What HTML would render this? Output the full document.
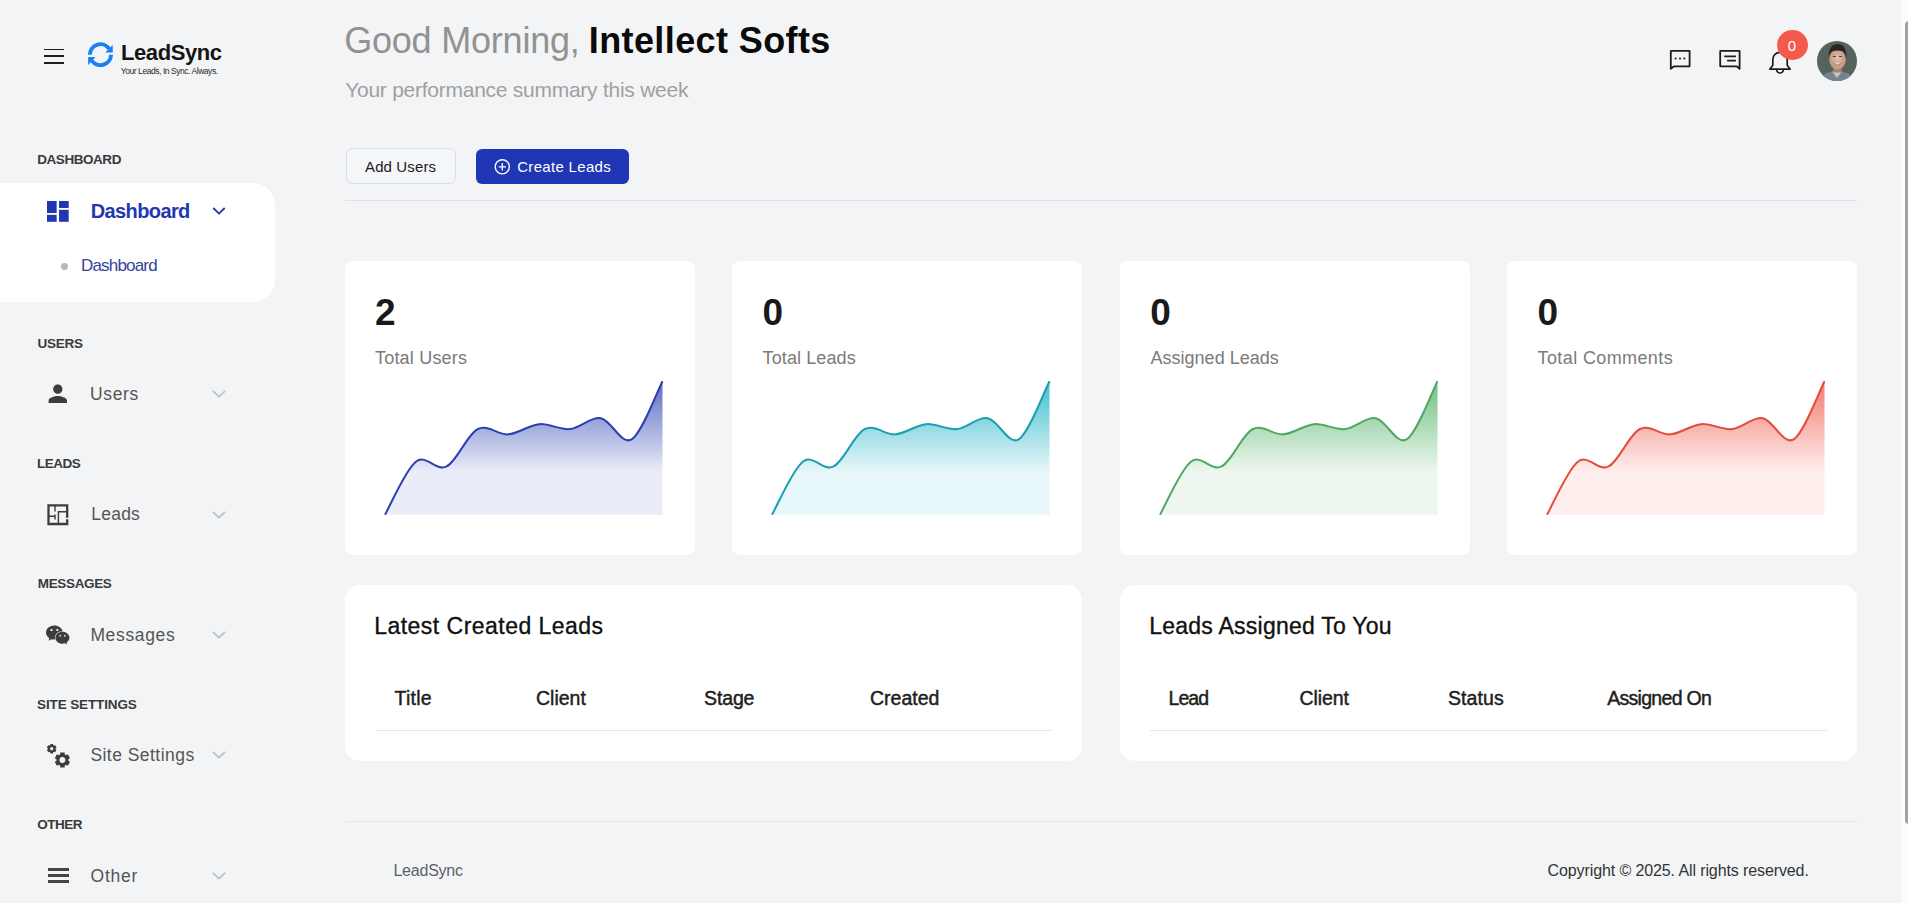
<!DOCTYPE html>
<html><head><meta charset="utf-8"><style>
*{box-sizing:border-box;margin:0;padding:0}
html,body{width:1908px;height:903px;overflow:hidden;background:#f3f4f6;font-family:"Liberation Sans",sans-serif}
.a{position:absolute}
.t{position:absolute;white-space:nowrap;line-height:1}
.card{position:absolute;background:#fff;border-radius:12px}
</style></head><body>
<!-- hamburger -->
<div class="a" style="left:44px;top:48.5px;width:20px;height:1.8px;background:#1e1e1e"></div>
<div class="a" style="left:44px;top:55.2px;width:20px;height:1.8px;background:#1e1e1e"></div>
<div class="a" style="left:44px;top:62px;width:20px;height:1.8px;background:#1e1e1e"></div>
<!-- logo icon -->
<svg class="a" style="left:84px;top:38px" width="34" height="34" viewBox="0 0 34 34">
<path d="M6 16.7 A10.5 10.5 0 0 1 25.2 10.8" fill="none" stroke="#1a7ff0" stroke-width="4"/>
<polygon points="28.7,7.0 28.8,14.6 21.3,14.6" fill="#1a7ff0"/>
<path d="M27 16.7 A10.5 10.5 0 0 1 7.9 22.6" fill="none" stroke="#1a7ff0" stroke-width="4"/>
<polygon points="4.2,19.1 4.2,26.9 11.5,19.1" fill="#1a7ff0"/>
</svg>
<!-- sidebar active panel -->
<div class="a" style="left:0;top:182.5px;width:275px;height:119.5px;background:#fff;border-radius:0 22px 22px 0"></div>
<svg class="a" style="left:47px;top:201.2px" width="21.7" height="20.8" viewBox="0 0 18 17.3" preserveAspectRatio="none">
<rect x="0" y="0" width="8" height="10" fill="#1f38b0"/><rect x="0" y="11.5" width="8" height="5.8" fill="#1f38b0"/>
<rect x="10" y="0" width="8" height="5.8" fill="#1f38b0"/><rect x="10" y="7.3" width="8" height="10" fill="#1f38b0"/>
</svg>
<svg class="a" style="left:210px;top:203px" width="18" height="16" viewBox="0 0 18 16"><path d="M3.3 5 L9 10.6 L14.7 5" fill="none" stroke="#2532a6" stroke-width="1.8"/></svg>
<div class="a" style="left:61px;top:263.3px;width:6.8px;height:6.8px;border-radius:50%;background:#b9b9b9"></div>
<!-- users icon -->
<svg class="a" style="left:44.1px;top:380.4px" width="27.6" height="27.6" viewBox="0 0 24 24"><path fill="#3d3d3d" d="M12 12c2.21 0 4-1.79 4-4s-1.79-4-4-4-4 1.79-4 4 1.79 4 4 4zm0 2c-2.67 0-8 1.34-8 4v2h16v-2c0-2.66-5.33-4-8-4z"/></svg>
<!-- leads icon -->
<svg class="a" style="left:46px;top:503px" width="24" height="24" viewBox="0 0 24 24">
<path d="M21.2 13.5 V2.3 H2.5 V21 H21.2 V17.5" fill="none" stroke="#3d3d3d" stroke-width="2.3" stroke-linejoin="miter" stroke-linecap="square"/>
<path d="M9 3 V8.5 M9 11.5 V16.5 M2.5 13.3 H9 M12.4 21 V8.8 H21.2" fill="none" stroke="#3d3d3d" stroke-width="1.4"/>
</svg>
<!-- messages icon (weixin) -->
<svg class="a" style="left:46px;top:624.5px" width="23.5" height="21" viewBox="13 22 550 490"><path fill="#3d3d3d" d="M385.2 167.6c6.4 0 12.6.3 18.8 1.1C387.4 90.3 303.3 32 207.7 32 100.5 32 13 104.8 13 197.4c0 53.4 29.3 97.5 77.9 131.6l-19.3 58.6 68-34.1c24.4 4.8 43.8 9.7 68.2 9.7 6.2 0 12.1-.3 18.3-.8-4-12.9-6.2-26.6-6.2-40.8-.1-84.9 72.9-154 165.3-154zm-104.5-52.9c14.5 0 24.2 9.7 24.2 24.4 0 14.5-9.7 24.2-24.2 24.2-14.8 0-29.3-9.7-29.3-24.2.1-14.7 14.6-24.4 29.3-24.4zm-136.4 48.6c-14.5 0-29.3-9.7-29.3-24.2 0-14.8 14.8-24.4 29.3-24.4 14.8 0 24.4 9.7 24.4 24.4 0 14.6-9.6 24.2-24.4 24.2zM563 319.4c0-77.9-77.9-141.3-165.4-141.3-92.7 0-165.4 63.4-165.4 141.3S305 460.7 397.6 460.7c19.3 0 38.9-5.1 58.6-9.9l53.4 29.3-14.8-48.6C534 402.1 563 363.2 563 319.4zm-219.1-24.5c-9.7 0-19.3-9.7-19.3-19.6 0-9.7 9.7-19.3 19.3-19.3 14.8 0 24.4 9.7 24.4 19.3 0 10-9.7 19.6-24.4 19.6zm107.1 0c-9.7 0-19.3-9.7-19.3-19.6 0-9.7 9.7-19.3 19.3-19.3 14.5 0 24.4 9.7 24.4 19.3.1 10-9.9 19.6-24.4 19.6z"/></svg>
<!-- settings icon -->
<svg class="a" style="left:0;top:0" width="100" height="800" viewBox="0 0 100 800"><path fill="#3d3d3d" fill-rule="evenodd" d="M50.26 745.07 L50.28 743.91 L53.12 743.91 L53.14 745.07 L54.12 745.64 L55.14 745.07 L56.56 747.53 L55.56 748.13 L55.56 749.27 L56.56 749.87 L55.14 752.33 L54.12 751.76 L53.14 752.33 L53.12 753.49 L50.28 753.49 L50.26 752.33 L49.28 751.76 L48.26 752.33 L46.84 749.87 L47.84 749.27 L47.84 748.13 L46.84 747.53 L48.26 745.07 L49.28 745.64 Z M50.10 748.70 a1.60 1.60 0 1 0 3.20 0 a1.60 1.60 0 1 0 -3.20 0 Z M60.15 754.33 L60.16 752.43 L64.64 752.43 L64.65 754.33 L66.19 755.22 L67.84 754.27 L70.08 758.16 L68.43 759.11 L68.43 760.89 L70.08 761.84 L67.84 765.73 L66.19 764.78 L64.65 765.67 L64.64 767.57 L60.16 767.57 L60.15 765.67 L58.61 764.78 L56.96 765.73 L54.72 761.84 L56.37 760.89 L56.37 759.11 L54.72 758.16 L56.96 754.27 L58.61 755.22 Z M59.50 760.00 a2.90 2.90 0 1 0 5.80 0 a2.90 2.90 0 1 0 -5.80 0 Z"/></svg>
<!-- other icon -->
<div class="a" style="left:47.5px;top:868.2px;width:21px;height:2.5px;background:#444"></div>
<div class="a" style="left:47.5px;top:874.2px;width:21px;height:2.5px;background:#444"></div>
<div class="a" style="left:47.5px;top:880.2px;width:21px;height:2.5px;background:#444"></div>
<!-- gray chevrons -->
<svg class="a" style="left:211px;top:386px" width="16" height="16" viewBox="0 0 16 16"><path d="M1.8 4.8 L8 10.6 L14.2 4.8" fill="none" stroke="#bcc0c9" stroke-width="1.8"/></svg>
<svg class="a" style="left:211px;top:506.5px" width="16" height="16" viewBox="0 0 16 16"><path d="M1.8 4.8 L8 10.6 L14.2 4.8" fill="none" stroke="#bcc0c9" stroke-width="1.8"/></svg>
<svg class="a" style="left:211px;top:627px" width="16" height="16" viewBox="0 0 16 16"><path d="M1.8 4.8 L8 10.6 L14.2 4.8" fill="none" stroke="#bcc0c9" stroke-width="1.8"/></svg>
<svg class="a" style="left:211px;top:747px" width="16" height="16" viewBox="0 0 16 16"><path d="M1.8 4.8 L8 10.6 L14.2 4.8" fill="none" stroke="#bcc0c9" stroke-width="1.8"/></svg>
<svg class="a" style="left:211px;top:867.5px" width="16" height="16" viewBox="0 0 16 16"><path d="M1.8 4.8 L8 10.6 L14.2 4.8" fill="none" stroke="#bcc0c9" stroke-width="1.8"/></svg>

<!-- buttons -->
<div class="a" style="left:345.5px;top:148.2px;width:110px;height:36.3px;border:1px solid #d8dce6;border-radius:7px;background:#f5f6f9"></div>
<div class="a" style="left:476px;top:149px;width:153px;height:34.8px;border-radius:6px;background:#1f37b5"></div>
<svg class="a" style="left:493px;top:157.5px" width="18" height="18" viewBox="0 0 18 18"><circle cx="9.3" cy="8.8" r="7.1" fill="none" stroke="#fff" stroke-width="1.35"/><path d="M9.3 5.1V12.5M5.6 8.8H13" stroke="#fff" stroke-width="1.35"/></svg>
<div class="a" style="left:345px;top:200px;width:1512px;height:1px;background:#dfe1e6"></div>
<!-- top right icons -->
<svg class="a" style="left:1665px;top:45px" width="30" height="30" viewBox="0 0 30 30">
<path d="M5.8 23.8 V6.2 Q5.8 5.8 6.2 5.8 H24.2 Q24.6 5.8 24.6 6.2 V20.9 Q24.6 21.3 24.2 21.3 H9.2 Z" fill="none" stroke="#1c1c1c" stroke-width="1.8" stroke-linejoin="round"/>
<circle cx="10.6" cy="13.5" r="1.05" fill="#1c1c1c"/><circle cx="15" cy="13.5" r="1.05" fill="#1c1c1c"/><circle cx="19.3" cy="13.5" r="1.05" fill="#1c1c1c"/>
</svg>
<svg class="a" style="left:1715px;top:45px" width="30" height="30" viewBox="0 0 30 30">
<path d="M24.6 23.8 V6.2 Q24.6 5.8 24.2 5.8 H5.6 Q5.2 5.8 5.2 6.2 V20.9 Q5.2 21.3 5.6 21.3 H21.6 Z" fill="none" stroke="#1c1c1c" stroke-width="1.8" stroke-linejoin="round"/>
<path d="M9.2 11.4 H20.9 M12.1 15.6 H20.9" stroke="#1c1c1c" stroke-width="1.8"/>
</svg>
<svg class="a" style="left:1765px;top:45px" width="30" height="32" viewBox="0 0 30 32">
<path d="M4.8 24.2 L7.8 20.3 V14.5 A7.2 7.2 0 0 1 22.2 14.5 V20.3 L25.2 24.2 Z" fill="none" stroke="#1c1c1c" stroke-width="1.7" stroke-linejoin="round"/>
<path d="M11.6 24.6 A3.4 3.4 0 0 0 18.4 24.6" fill="none" stroke="#1c1c1c" stroke-width="1.7"/>
</svg>
<div class="a" style="left:1776.5px;top:30px;width:31px;height:30px;border-radius:50%;background:#f5594b"></div>
<!-- avatar -->
<svg class="a" style="left:1817px;top:41px" width="40" height="40" viewBox="0 0 40 40">
<defs><clipPath id="av"><circle cx="20" cy="20" r="20"/></clipPath>
<radialGradient id="fg" cx="0.5" cy="0.45" r="0.6"><stop offset="0" stop-color="#e2c2ab"/><stop offset="1" stop-color="#b89077"/></radialGradient></defs>
<g clip-path="url(#av)">
<rect width="40" height="40" fill="#56625c"/>
<path d="M2 40 C4 33.5 11 30.5 20 30.5 C29 30.5 36 33.5 38 40 Z" fill="#76848f"/>
<path d="M15 30.5 L20 37 L25 30.5 Z" fill="#c9c3bd"/>
<rect x="16.5" y="25" width="8" height="6.5" fill="#a98470"/>
<ellipse cx="20.5" cy="18.5" rx="8.3" ry="10.2" fill="url(#fg)"/>
<path d="M11.8 18 C10.8 7 15.5 3 20.5 3 C26 3 30.2 7 29.2 18 C28.6 12.5 27 9.5 20.5 9.5 C14 9.5 12.4 12.5 11.8 18 Z" fill="#2c2520"/>
<path d="M15.8 15.5 h3 M22 15.5 h3" stroke="#5a3d30" stroke-width="1.1"/>
<path d="M16.5 22.5 Q20.5 25.5 24.5 22.5" fill="#fff" stroke="#8c5e4a" stroke-width="0.8"/>
</g></svg>
<!-- stat cards -->
<div class="card" style="left:345px;top:261px;width:350px;height:294px;border-radius:8px"></div>
<div class="card" style="left:732px;top:261px;width:350px;height:294px;border-radius:8px"></div>
<div class="card" style="left:1120px;top:261px;width:350px;height:294px;border-radius:8px"></div>
<div class="card" style="left:1507px;top:261px;width:350px;height:294px;border-radius:8px"></div>
<!-- table cards -->
<div class="card" style="left:345px;top:585px;width:737px;height:175.5px;border-radius:15px"></div>
<div class="card" style="left:1120px;top:585px;width:737px;height:175.5px;border-radius:15px"></div>
<div class="a" style="left:375px;top:729.5px;width:677px;height:1px;background:#e6e6e6"></div>
<div class="a" style="left:1150px;top:729.5px;width:677px;height:1px;background:#e6e6e6"></div>
<!-- footer -->
<div class="a" style="left:345px;top:821px;width:1512px;height:1px;background:#e3e5e9"></div>
<!-- scrollbar -->
<div class="a" style="left:1900.5px;top:0;width:8px;height:903px;background:#fcfcfc"></div>
<div class="a" style="left:1905px;top:20.5px;width:8px;height:803px;background:#a2a2a2;border-radius:4px"></div>

<svg class="a" style="left:345px;top:261px" width="350" height="294" viewBox="0 0 350 294">
<defs><linearGradient id="gr1" x1="0" y1="120" x2="0" y2="254" gradientUnits="userSpaceOnUse">
<stop offset="0" stop-color="#3049b5" stop-opacity="0.8"/><stop offset="0.68" stop-color="#3049b5" stop-opacity="0.1"/><stop offset="1" stop-color="#3049b5" stop-opacity="0.1"/></linearGradient></defs>
<path d="M40.00 253.70 C45.14 244.86 60.56 208.72 70.83 200.68 C81.11 192.64 91.39 210.89 101.67 205.48 C111.94 200.08 122.22 173.60 132.50 168.25 C142.78 162.90 153.06 174.20 163.33 173.35 C173.61 172.51 183.89 164.06 194.17 163.18 C204.44 162.31 214.72 169.10 225.00 168.10 C235.28 167.10 245.56 155.45 255.83 157.17 C266.11 158.90 276.39 184.61 286.67 178.45 C296.94 172.29 312.36 129.91 317.50 120.20 L317.50 253.70 L40.00 253.70 Z" fill="url(#gr1)"/>
<path d="M40.00 253.70 C45.14 244.86 60.56 208.72 70.83 200.68 C81.11 192.64 91.39 210.89 101.67 205.48 C111.94 200.08 122.22 173.60 132.50 168.25 C142.78 162.90 153.06 174.20 163.33 173.35 C173.61 172.51 183.89 164.06 194.17 163.18 C204.44 162.31 214.72 169.10 225.00 168.10 C235.28 167.10 245.56 155.45 255.83 157.17 C266.11 158.90 276.39 184.61 286.67 178.45 C296.94 172.29 312.36 129.91 317.50 120.20" fill="none" stroke="#2b3fae" stroke-width="2" stroke-linejoin="round"/>
</svg>
<svg class="a" style="left:732px;top:261px" width="350" height="294" viewBox="0 0 350 294">
<defs><linearGradient id="gr2" x1="0" y1="120" x2="0" y2="254" gradientUnits="userSpaceOnUse">
<stop offset="0" stop-color="#13aec2" stop-opacity="0.8"/><stop offset="0.68" stop-color="#13aec2" stop-opacity="0.1"/><stop offset="1" stop-color="#13aec2" stop-opacity="0.1"/></linearGradient></defs>
<path d="M40.00 253.70 C45.14 244.86 60.56 208.72 70.83 200.68 C81.11 192.64 91.39 210.89 101.67 205.48 C111.94 200.08 122.22 173.60 132.50 168.25 C142.78 162.90 153.06 174.20 163.33 173.35 C173.61 172.51 183.89 164.06 194.17 163.18 C204.44 162.31 214.72 169.10 225.00 168.10 C235.28 167.10 245.56 155.45 255.83 157.17 C266.11 158.90 276.39 184.61 286.67 178.45 C296.94 172.29 312.36 129.91 317.50 120.20 L317.50 253.70 L40.00 253.70 Z" fill="url(#gr2)"/>
<path d="M40.00 253.70 C45.14 244.86 60.56 208.72 70.83 200.68 C81.11 192.64 91.39 210.89 101.67 205.48 C111.94 200.08 122.22 173.60 132.50 168.25 C142.78 162.90 153.06 174.20 163.33 173.35 C173.61 172.51 183.89 164.06 194.17 163.18 C204.44 162.31 214.72 169.10 225.00 168.10 C235.28 167.10 245.56 155.45 255.83 157.17 C266.11 158.90 276.39 184.61 286.67 178.45 C296.94 172.29 312.36 129.91 317.50 120.20" fill="none" stroke="#1a9fb1" stroke-width="2" stroke-linejoin="round"/>
</svg>
<svg class="a" style="left:1120px;top:261px" width="350" height="294" viewBox="0 0 350 294">
<defs><linearGradient id="gr3" x1="0" y1="120" x2="0" y2="254" gradientUnits="userSpaceOnUse">
<stop offset="0" stop-color="#4caf62" stop-opacity="0.8"/><stop offset="0.68" stop-color="#4caf62" stop-opacity="0.1"/><stop offset="1" stop-color="#4caf62" stop-opacity="0.1"/></linearGradient></defs>
<path d="M40.00 253.70 C45.14 244.86 60.56 208.72 70.83 200.68 C81.11 192.64 91.39 210.89 101.67 205.48 C111.94 200.08 122.22 173.60 132.50 168.25 C142.78 162.90 153.06 174.20 163.33 173.35 C173.61 172.51 183.89 164.06 194.17 163.18 C204.44 162.31 214.72 169.10 225.00 168.10 C235.28 167.10 245.56 155.45 255.83 157.17 C266.11 158.90 276.39 184.61 286.67 178.45 C296.94 172.29 312.36 129.91 317.50 120.20 L317.50 253.70 L40.00 253.70 Z" fill="url(#gr3)"/>
<path d="M40.00 253.70 C45.14 244.86 60.56 208.72 70.83 200.68 C81.11 192.64 91.39 210.89 101.67 205.48 C111.94 200.08 122.22 173.60 132.50 168.25 C142.78 162.90 153.06 174.20 163.33 173.35 C173.61 172.51 183.89 164.06 194.17 163.18 C204.44 162.31 214.72 169.10 225.00 168.10 C235.28 167.10 245.56 155.45 255.83 157.17 C266.11 158.90 276.39 184.61 286.67 178.45 C296.94 172.29 312.36 129.91 317.50 120.20" fill="none" stroke="#4ea864" stroke-width="2" stroke-linejoin="round"/>
</svg>
<svg class="a" style="left:1507px;top:261px" width="350" height="294" viewBox="0 0 350 294">
<defs><linearGradient id="gr4" x1="0" y1="120" x2="0" y2="254" gradientUnits="userSpaceOnUse">
<stop offset="0" stop-color="#ef5a4a" stop-opacity="0.8"/><stop offset="0.68" stop-color="#ef5a4a" stop-opacity="0.1"/><stop offset="1" stop-color="#ef5a4a" stop-opacity="0.1"/></linearGradient></defs>
<path d="M40.00 253.70 C45.14 244.86 60.56 208.72 70.83 200.68 C81.11 192.64 91.39 210.89 101.67 205.48 C111.94 200.08 122.22 173.60 132.50 168.25 C142.78 162.90 153.06 174.20 163.33 173.35 C173.61 172.51 183.89 164.06 194.17 163.18 C204.44 162.31 214.72 169.10 225.00 168.10 C235.28 167.10 245.56 155.45 255.83 157.17 C266.11 158.90 276.39 184.61 286.67 178.45 C296.94 172.29 312.36 129.91 317.50 120.20 L317.50 253.70 L40.00 253.70 Z" fill="url(#gr4)"/>
<path d="M40.00 253.70 C45.14 244.86 60.56 208.72 70.83 200.68 C81.11 192.64 91.39 210.89 101.67 205.48 C111.94 200.08 122.22 173.60 132.50 168.25 C142.78 162.90 153.06 174.20 163.33 173.35 C173.61 172.51 183.89 164.06 194.17 163.18 C204.44 162.31 214.72 169.10 225.00 168.10 C235.28 167.10 245.56 155.45 255.83 157.17 C266.11 158.90 276.39 184.61 286.67 178.45 C296.94 172.29 312.36 129.91 317.50 120.20" fill="none" stroke="#e34b3c" stroke-width="2" stroke-linejoin="round"/>
</svg>
<div class="t" id="logo" style="left:121.00px;top:41.94px;font-size:22px;font-weight:bold;color:#151515;letter-spacing:-0.428px;">LeadSync</div>
<div class="t" id="tag" style="left:120.80px;top:67.39px;font-size:8.5px;font-weight:normal;color:#2a2a2a;letter-spacing:-0.445px;">Your Leads, In Sync. Always.</div>
<div class="t" id="s1" style="left:37.20px;top:153.47px;font-size:13.5px;font-weight:bold;color:#3a3a3a;letter-spacing:-0.438px;">DASHBOARD</div>
<div class="t" id="dash" style="left:90.80px;top:200.52px;font-size:20px;font-weight:bold;color:#1f38b0;letter-spacing:-0.625px;">Dashboard</div>
<div class="t" id="subdash" style="left:81.00px;top:257.27px;font-size:17px;font-weight:normal;color:#34449c;letter-spacing:-0.812px;">Dashboard</div>
<div class="t" id="s2" style="left:37.40px;top:336.98px;font-size:13.5px;font-weight:bold;color:#3a3a3a;letter-spacing:-0.250px;">USERS</div>
<div class="t" id="i2" style="left:90.00px;top:386.05px;font-size:17.5px;font-weight:normal;color:#555555;letter-spacing:0.625px;">Users</div>
<div class="t" id="s3" style="left:37.00px;top:456.75px;font-size:13.5px;font-weight:bold;color:#3a3a3a;letter-spacing:-0.500px;">LEADS</div>
<div class="t" id="i3" style="left:91.20px;top:506.08px;font-size:17.5px;font-weight:normal;color:#555555;letter-spacing:0.250px;">Leads</div>
<div class="t" id="s4" style="left:37.80px;top:576.74px;font-size:13.5px;font-weight:bold;color:#3a3a3a;letter-spacing:-0.357px;">MESSAGES</div>
<div class="t" id="i4" style="left:90.40px;top:626.64px;font-size:17.5px;font-weight:normal;color:#555555;letter-spacing:0.642px;">Messages</div>
<div class="t" id="s5" style="left:37.00px;top:697.50px;font-size:13.5px;font-weight:bold;color:#3a3a3a;letter-spacing:-0.125px;">SITE SETTINGS</div>
<div class="t" id="i5" style="left:90.40px;top:746.64px;font-size:17.5px;font-weight:normal;color:#555555;letter-spacing:0.458px;">Site Settings</div>
<div class="t" id="s6" style="left:37.20px;top:817.50px;font-size:13.5px;font-weight:bold;color:#3a3a3a;letter-spacing:-0.500px;">OTHER</div>
<div class="t" id="i6" style="left:90.60px;top:868.04px;font-size:17.5px;font-weight:normal;color:#555555;letter-spacing:0.750px;">Other</div>
<div class="t" id="g1" style="left:344.20px;top:23.16px;font-size:36px;font-weight:normal;color:#929292;letter-spacing:-0.208px;">Good Morning,</div>
<div class="t" id="g2" style="left:588.80px;top:23.10px;font-size:36px;font-weight:bold;color:#0a0a0a;letter-spacing:0.393px;">Intellect Softs</div>
<div class="t" id="sub" style="left:345.20px;top:79.33px;font-size:21px;font-weight:normal;color:#a0a0a0;letter-spacing:-0.257px;">Your performance summary this week</div>
<div class="t" id="addu" style="left:365.00px;top:159.39px;font-size:15px;font-weight:normal;color:#1a1a1a;letter-spacing:0.125px;">Add Users</div>
<div class="t" id="crl" style="left:517.20px;top:159.39px;font-size:15px;font-weight:normal;color:#ffffff;letter-spacing:0.318px;">Create Leads</div>
<div class="t" id="badge" style="left:1787.80px;top:37.80px;font-size:15px;font-weight:normal;color:#ffffff;letter-spacing:0.000px;">0</div>
<div class="t" id="n1" style="left:375.00px;top:293.53px;font-size:37px;font-weight:bold;color:#1a1a1a;letter-spacing:0.000px;">2</div>
<div class="t" id="n2" style="left:762.60px;top:293.53px;font-size:37px;font-weight:bold;color:#1a1a1a;letter-spacing:0.000px;">0</div>
<div class="t" id="n3" style="left:1150.20px;top:293.53px;font-size:37px;font-weight:bold;color:#1a1a1a;letter-spacing:0.000px;">0</div>
<div class="t" id="n4" style="left:1537.60px;top:293.53px;font-size:37px;font-weight:bold;color:#1a1a1a;letter-spacing:0.000px;">0</div>
<div class="t" id="l1" style="left:375.00px;top:348.92px;font-size:18px;font-weight:normal;color:#7a7a7a;letter-spacing:0.200px;">Total Users</div>
<div class="t" id="l2" style="left:762.60px;top:348.92px;font-size:18px;font-weight:normal;color:#7a7a7a;letter-spacing:0.100px;">Total Leads</div>
<div class="t" id="l3" style="left:1150.60px;top:348.92px;font-size:18px;font-weight:normal;color:#7a7a7a;letter-spacing:0.000px;">Assigned Leads</div>
<div class="t" id="l4" style="left:1537.60px;top:348.92px;font-size:18px;font-weight:normal;color:#7a7a7a;letter-spacing:0.384px;">Total Comments</div>
<div class="t" id="t1" style="left:374.20px;top:614.89px;font-size:23px;font-weight:normal;color:#111111;letter-spacing:0.474px;-webkit-text-stroke:0.35px #111;">Latest Created Leads</div>
<div class="t" id="t2" style="left:1149.20px;top:614.89px;font-size:23px;font-weight:normal;color:#111111;letter-spacing:0.250px;-webkit-text-stroke:0.35px #111;">Leads Assigned To You</div>
<div class="t" id="h1" style="left:394.60px;top:689.14px;font-size:19.5px;font-weight:normal;color:#1e1e1e;letter-spacing:0.250px;-webkit-text-stroke:0.45px #1e1e1e;">Title</div>
<div class="t" id="h2" style="left:536.00px;top:689.14px;font-size:19.5px;font-weight:normal;color:#1e1e1e;letter-spacing:-0.000px;-webkit-text-stroke:0.45px #1e1e1e;">Client</div>
<div class="t" id="h3" style="left:704.00px;top:689.14px;font-size:19.5px;font-weight:normal;color:#1e1e1e;letter-spacing:-0.125px;-webkit-text-stroke:0.45px #1e1e1e;">Stage</div>
<div class="t" id="h4" style="left:870.00px;top:689.14px;font-size:19.5px;font-weight:normal;color:#1e1e1e;letter-spacing:0.000px;-webkit-text-stroke:0.45px #1e1e1e;">Created</div>
<div class="t" id="h5" style="left:1168.60px;top:689.14px;font-size:19.5px;font-weight:normal;color:#1e1e1e;letter-spacing:-1.000px;-webkit-text-stroke:0.45px #1e1e1e;">Lead</div>
<div class="t" id="h6" style="left:1299.60px;top:689.14px;font-size:19.5px;font-weight:normal;color:#1e1e1e;letter-spacing:-0.100px;-webkit-text-stroke:0.45px #1e1e1e;">Client</div>
<div class="t" id="h7" style="left:1448.00px;top:689.14px;font-size:19.5px;font-weight:normal;color:#1e1e1e;letter-spacing:0.100px;-webkit-text-stroke:0.45px #1e1e1e;">Status</div>
<div class="t" id="h8" style="left:1607.20px;top:689.14px;font-size:19.5px;font-weight:normal;color:#1e1e1e;letter-spacing:-0.700px;-webkit-text-stroke:0.45px #1e1e1e;">Assigned On</div>
<div class="t" id="fl" style="left:393.40px;top:863.07px;font-size:16px;font-weight:normal;color:#5a5f69;letter-spacing:-0.214px;">LeadSync</div>
<div class="t" id="fr" style="left:1547.60px;top:863.07px;font-size:16px;font-weight:normal;color:#333333;letter-spacing:-0.108px;">Copyright © 2025. All rights reserved.</div>
</body></html>
